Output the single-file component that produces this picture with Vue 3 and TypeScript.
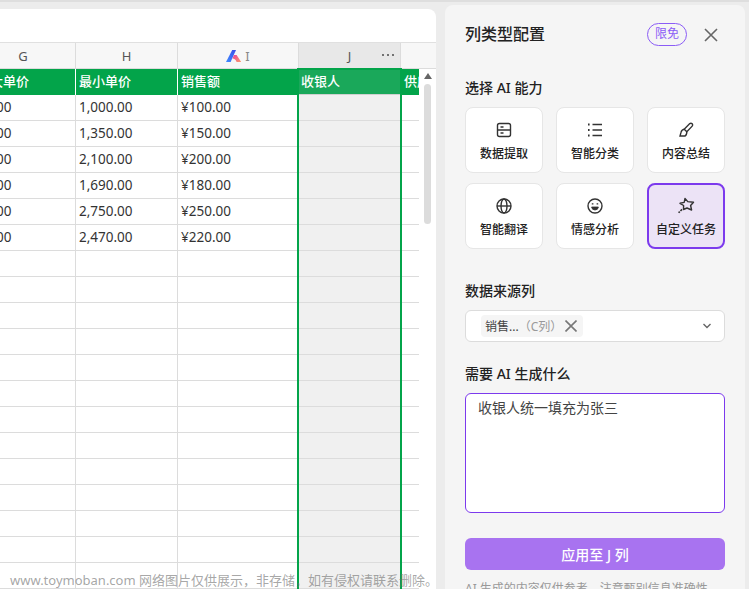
<script setup lang="ts">
import { ref } from "vue";

// Visible part of the sheet: column G starts off screen on the left
const rows = [
  ["90.00", "1,000.00", "¥100.00"],
  ["90.00", "1,350.00", "¥150.00"],
  ["90.00", "2,100.00", "¥200.00"],
  ["90.00", "1,690.00", "¥180.00"],
  ["90.00", "2,750.00", "¥250.00"],
  ["90.00", "2,470.00", "¥220.00"],
];
const blankRows = 13;

const abilities = [
  { id: "extract", label: "数据提取" },
  { id: "classify", label: "智能分类" },
  { id: "summary", label: "内容总结" },
  { id: "translate", label: "智能翻译" },
  { id: "sentiment", label: "情感分析" },
  { id: "custom", label: "自定义任务" },
];

const selected = ref("custom");
const prompt = ref("收银人统一填充为张三");
</script>

<template>
  <div class="page">
    <section class="sheet">
      <div class="toolbar"></div>
      <div class="col-heads">
        <div class="col-head">G</div>
        <div class="col-head">H</div>
        <div class="col-head col-head--ai">
          <svg class="ai-logo" width="16" height="12" viewBox="0 0 16 12">
            <defs>
              <linearGradient id="aiBlue" x1="0" y1="1" x2="1" y2="0">
                <stop offset="0" stop-color="#3f8cff" />
                <stop offset="1" stop-color="#3b4ce8" />
              </linearGradient>
              <linearGradient id="aiPink" x1="0" y1="0" x2="1" y2="1">
                <stop offset="0" stop-color="#e8459a" />
                <stop offset="1" stop-color="#ff9a6b" />
              </linearGradient>
            </defs>
            <path d="M0 12 L6.2 0 H10 L4.6 12 Z" fill="url(#aiBlue)" />
            <path d="M8 5 H10.6 L15.2 12 H10.6 Q9.6 8.6 6.4 8.4 Z" fill="url(#aiPink)" />
          </svg>
          I
        </div>
        <div class="col-head col-head--active">
          J
          <svg class="col-more" width="14" height="4" viewBox="0 0 14 4" fill="#555">
            <circle cx="2" cy="2" r="1.1" />
            <circle cx="7" cy="2" r="1.1" />
            <circle cx="12" cy="2" r="1.1" />
          </svg>
        </div>
        <div class="col-head col-head--rest"></div>
      </div>

      <div class="grid-wrap">
        <div class="grid">
          <div class="row row--title">
            <div class="cell">最大单价</div>
            <div class="cell">最小单价</div>
            <div class="cell">销售额</div>
            <div class="cell cell--active">收银人</div>
            <div class="cell">供应商</div>
          </div>
          <div v-for="(row, i) in rows" :key="i" class="row">
            <div v-for="(val, j) in row" :key="j" class="cell">{{ val }}</div>
            <div class="cell cell--active"></div>
            <div class="cell"></div>
          </div>
          <div v-for="n in blankRows" :key="'blank' + n" class="row">
            <div class="cell"></div>
            <div class="cell"></div>
            <div class="cell"></div>
            <div class="cell cell--active"></div>
            <div class="cell"></div>
          </div>
          <div class="col-selection"></div>
        </div>
        <div class="scrollbar">
          <span class="scroll-up"></span>
          <span class="scroll-thumb"></span>
        </div>
      </div>
    </section>

    <aside class="panel">
      <header class="panel-head">
        <h2 class="panel-title">列类型配置</h2>
        <span class="free-chip">限免</span>
        <button class="close-btn" aria-label="关闭">
          <svg width="14" height="14" viewBox="0 0 14 14" fill="none" stroke="#666" stroke-width="1.6">
            <path d="M1 1 L13 13 M13 1 L1 13" />
          </svg>
        </button>
      </header>

      <div class="label label--first">选择 AI 能力</div>
      <div class="abilities">
        <button
          v-for="item in abilities"
          :key="item.id"
          class="ability"
          :class="{ 'ability--active': item.id === selected }"
          @click="selected = item.id"
        >
          <svg class="ability-icon" width="18" height="18" viewBox="0 0 18 18" fill="none" stroke="#333" stroke-width="1.4">
            <template v-if="item.id === 'extract'">
              <rect x="2.5" y="2.5" width="13" height="13" rx="2" />
              <path d="M2.5 9 H15.5 M5.5 6 H8.5 M5.5 12 H8.5" />
            </template>
            <template v-else-if="item.id === 'classify'">
              <path d="M6.5 3.5 H16 M6.5 9 H16 M6.5 14.5 H16" />
              <path d="M2 3.5 H3.6 M2 9 H3.6 M2 14.5 H3.6" stroke-width="1.8" />
            </template>
            <template v-else-if="item.id === 'summary'">
              <path d="M7.2 8.2 L12.8 2.6 Q14 1.6 15.2 2.8 Q16.2 4 15.2 5.1 L9.8 10.8 Z" />
              <path d="M7.2 8.2 Q4.6 8.6 4 11.4 L3 15 H8 Q9.8 14.2 9.8 10.8" />
            </template>
            <template v-else-if="item.id === 'translate'">
              <circle cx="9" cy="9" r="7" />
              <ellipse cx="9" cy="9" rx="3" ry="7" />
              <path d="M2 9 H16" />
            </template>
            <template v-else-if="item.id === 'sentiment'">
              <circle cx="9" cy="9" r="7" />
              <path d="M5.6 10 H12.4 Q12 13 9 13 Q6 13 5.6 10 Z" fill="#333" stroke-width="0.8" />
              <path d="M6.6 6.2 V7.6 M11.4 6.2 V7.6" stroke-width="1.6" />
            </template>
            <template v-else>
              <path d="M8 1.5 L10.8 4.6 L16.5 5.2 L13.6 8.5 L14.6 13 L10 11 L6.5 12.5 L6.6 8.5 L3 6.3 L7.2 5.4 Z" stroke-linejoin="round" />
              <path d="M5 12.4 L1.6 15.8" stroke-dasharray="2.2 1" stroke-width="1.6" />
            </template>
          </svg>
          <span class="ability-name">{{ item.label }}</span>
        </button>
      </div>

      <div class="label label--source">数据来源列</div>
      <div class="select-box">
        <span class="tag">
          <span class="tag-name">销售...</span>
          <span class="tag-col">（C列）</span>
          <svg width="12" height="12" viewBox="0 0 12 12" fill="none" stroke="#777" stroke-width="1.6">
            <path d="M0.5 0.5 L11.5 11.5 M11.5 0.5 L0.5 11.5" />
          </svg>
        </span>
        <svg class="chevron" width="10" height="6" viewBox="0 0 10 6" fill="none" stroke="#666" stroke-width="1.4">
          <path d="M1.5 1 L5 4.5 L8.5 1" />
        </svg>
      </div>

      <div class="label label--need">需要 AI 生成什么</div>
      <textarea v-model="prompt" class="prompt" spellcheck="false"></textarea>

      <button class="apply-btn">应用至 J 列</button>
      <p class="hint">AI 生成的内容仅供参考，注意甄别信息准确性</p>
    </aside>

    <div class="watermark">www.toymoban.com 网络图片仅供展示，非存储，如有侵权请联系删除。</div>
  </div>
</template>

<style>
html,
body {
  margin: 0;
  overflow: hidden;
}
</style>

<style scoped>
.page {
  position: relative;
  display: flex;
  align-items: flex-start;
  gap: 9px;
  box-sizing: border-box;
  height: 589px;
  padding-right: 4px;
  overflow: hidden;
  background: #ececec;
  border-top: 2px solid #dedede;
  font-family: "Noto Sans", "Noto Sans CJK SC", sans-serif;
  color: #333;
}

/* Sheet */
.sheet {
  width: 436px;
  height: 600px;
  flex-shrink: 0;
  margin-top: 7px;
  background: #fff;
  border-top-right-radius: 8px;
  overflow: hidden;
}

.toolbar {
  height: 33px;
}

.col-heads {
  display: grid;
  grid-template-columns: 105px 102px 121px 102px 36px;
  height: 27px;
  margin-left: -29px;
  background: #f7f7f7;
  border-top: 1px solid #e0e0e0;
  box-sizing: border-box;
}

.col-head {
  display: flex;
  align-items: center;
  justify-content: center;
  position: relative;
  border-right: 1px solid #dcdcdc;
  border-bottom: 1px solid #dcdcdc;
  font-size: 13px;
  color: #555;
}

.col-head--ai {
  color: #888;
}

.col-head--active {
  background: #e8e8e8;
}

.col-head--rest {
  border-right: 0;
}

.col-more {
  position: absolute;
  right: 5px;
  top: 10px;
}

.ai-logo {
  margin-right: 3px;
}

.grid-wrap {
  display: flex;
}

.grid {
  position: relative;
  flex-shrink: 0;
  margin-left: -29px;
  width: 448px;
}

.row {
  display: grid;
  grid-template-columns: 105px 102px 121px 102px 18px;
  height: 26px;
  box-sizing: border-box;
}

.cell {
  box-sizing: border-box;
  padding: 0 3px;
  border-right: 1px solid #dcdcdc;
  border-bottom: 1px solid #dcdcdc;
  font-size: 13.5px;
  line-height: 25px;
  white-space: nowrap;
  overflow: hidden;
  color: #333;
}

.row > .cell:first-child {
  padding-left: 6px;
}

.row > .cell:last-child {
  border-right: 0;
}

.cell--active {
  background: #f0f0f0;
}

.row--title .cell {
  background: #03a44a;
  color: #fff;
  font-size: 13px;
  font-weight: 500;
  border-right-color: #fff;
  border-bottom: 0;
}

.row--title .cell--active {
  padding-left: 2px;
  background: #1aa85a;
  border-bottom: 1px solid #d0d0d0;
}

.col-selection {
  position: absolute;
  left: 326px;
  top: -1px;
  bottom: 0;
  width: 105px;
  box-sizing: border-box;
  border: 2.5px solid #03a44a;
  border-bottom: 0;
  pointer-events: none;
}

.scrollbar {
  position: relative;
  width: 17px;
  flex-shrink: 0;
  background: #fff;
}

.scroll-up {
  display: block;
  margin: 4px auto 0;
  width: 0;
  height: 0;
  border-left: 4px solid transparent;
  border-right: 4px solid transparent;
  border-bottom: 6px solid #666;
}

.scroll-thumb {
  display: block;
  width: 7px;
  height: 140px;
  margin: 5px auto 0 5px;
  border-radius: 4px;
  background: #dcdcdc;
}

/* Config panel */
.panel {
  width: 300px;
  height: 600px;
  flex-shrink: 0;
  box-sizing: border-box;
  margin-top: 3px;
  padding: 18px 20px 0;
  background: #f5f5f5;
  border-radius: 8px 8px 0 0;
}

.panel-head {
  display: flex;
  align-items: center;
  height: 23px;
}

.panel-title {
  flex: 1;
  margin: 0 0 1px;
  font-size: 16px;
  font-weight: 500;
  line-height: 20px;
  color: #222;
}

.free-chip {
  box-sizing: border-box;
  width: 40px;
  height: 23px;
  border: 1px solid #8b5cf6;
  border-radius: 12px;
  font-size: 12px;
  line-height: 20px;
  text-align: center;
  color: #8b5cf6;
}

.close-btn {
  display: flex;
  width: 14px;
  height: 14px;
  margin-left: 17px;
  margin-right: 7px;
  padding: 0;
  border: 0;
  background: none;
  cursor: pointer;
}

.label {
  height: 20px;
  font-size: 14px;
  font-weight: 500;
  line-height: 19px;
  color: #222;
}

.label--first {
  margin-top: 32px;
}

.label--source {
  margin-top: 32px;
}

.label--need {
  margin-top: 22px;
}

.abilities {
  display: grid;
  grid-template-columns: repeat(3, 78px);
  grid-auto-rows: 66px;
  column-gap: 13px;
  row-gap: 10px;
  margin-top: 9px;
}

.ability {
  display: flex;
  flex-direction: column;
  align-items: center;
  box-sizing: border-box;
  padding: 13px 0 0;
  background: #fff;
  border: 1px solid #e6e6e6;
  border-radius: 8px;
  font-family: inherit;
  cursor: pointer;
}

.ability-icon {
  flex-shrink: 0;
}

.ability-name {
  margin-top: 7px;
  font-size: 12px;
  font-weight: 500;
  line-height: 16px;
  color: #222;
}

.ability--active {
  padding-top: 12px;
  background: #ece3f6;
  border: 2px solid #7c3aed;
}

.select-box {
  display: flex;
  align-items: center;
  justify-content: space-between;
  box-sizing: border-box;
  height: 32px;
  margin-top: 9px;
  padding: 0 12px 0 15px;
  background: #fff;
  border: 1px solid #dcdcdc;
  border-radius: 6px;
}

.tag {
  display: inline-flex;
  align-items: center;
  height: 22px;
  padding: 0 6px 0 4px;
  background: #f5f5f5;
  border-radius: 4px;
  font-size: 12px;
}

.tag-name {
  color: #444;
}

.tag-col {
  margin-right: 3px;
  color: #999;
}

.prompt {
  display: block;
  box-sizing: border-box;
  width: 260px;
  height: 120px;
  margin-top: 9px;
  padding: 4px 12px;
  background: #fff;
  border: 1px solid #7c3aed;
  border-radius: 6px;
  outline: none;
  resize: none;
  font-family: inherit;
  font-size: 14px;
  line-height: 20px;
  color: #444;
}

.apply-btn {
  display: block;
  width: 260px;
  height: 32px;
  margin-top: 25px;
  padding: 0;
  background: #a873f0;
  border: 0;
  border-radius: 6px;
  font-family: inherit;
  font-size: 14px;
  font-weight: 500;
  color: #fff;
  cursor: pointer;
}

.hint {
  margin: 11px 0 0;
  font-size: 12px;
  line-height: 16px;
  color: #999;
}

.watermark {
  position: absolute;
  left: 10px;
  bottom: 0;
  font-size: 13px;
  line-height: 18px;
  white-space: nowrap;
  color: rgba(110, 110, 110, 0.62);
  pointer-events: none;
}
</style>
